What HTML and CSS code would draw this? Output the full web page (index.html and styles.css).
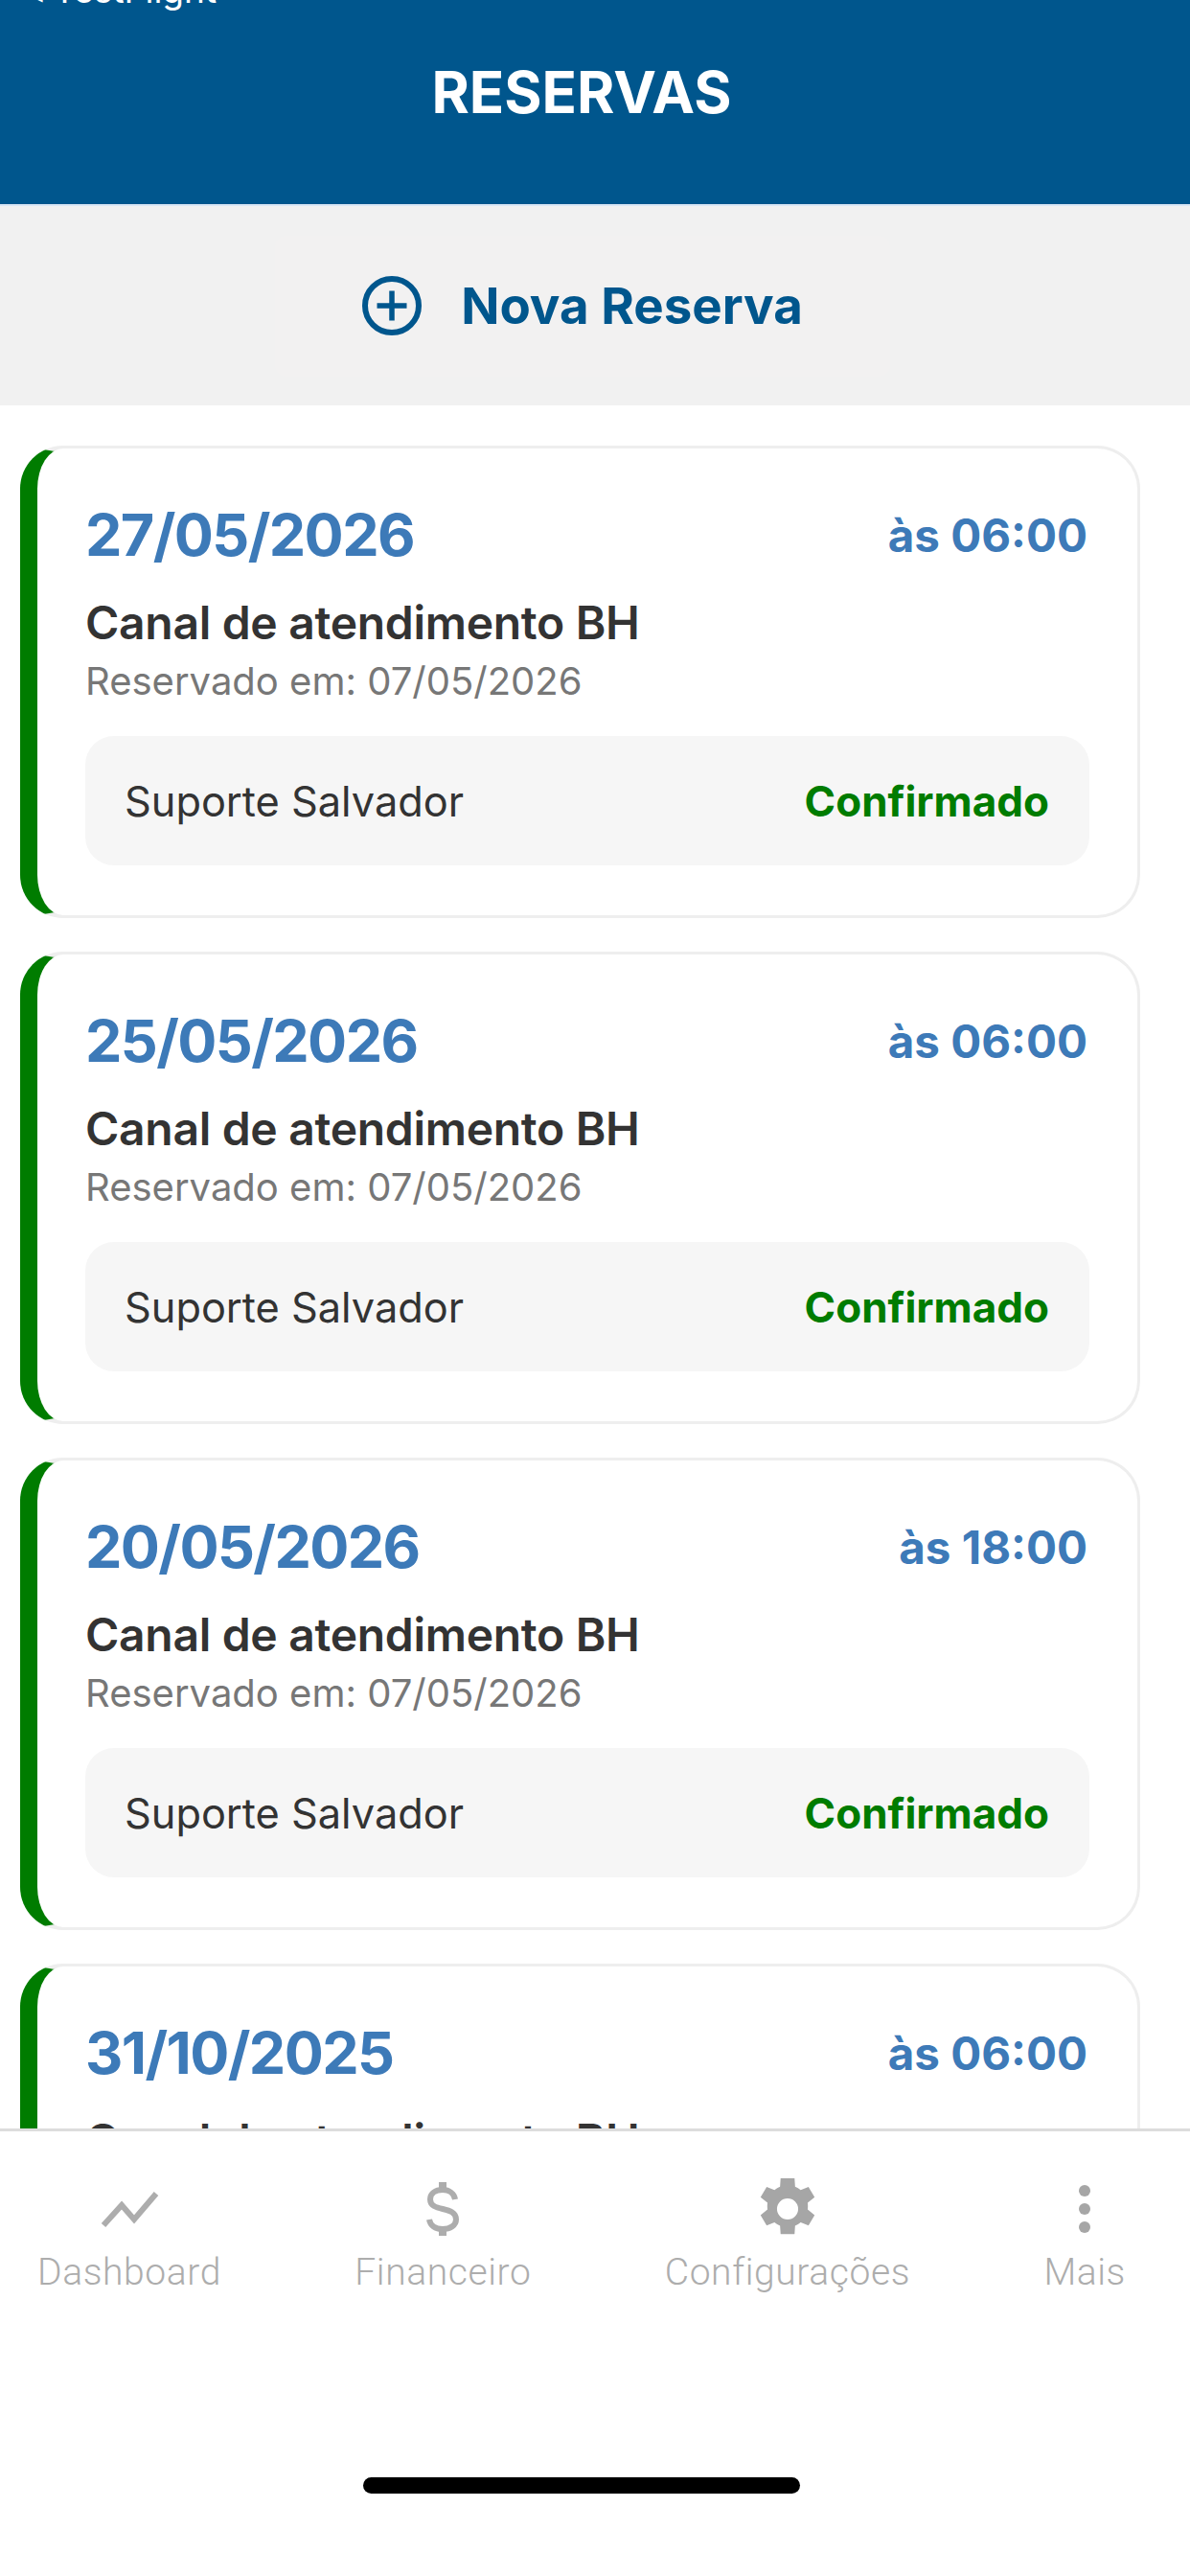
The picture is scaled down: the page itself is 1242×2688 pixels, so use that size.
FILE: index.html
```html
<!DOCTYPE html>
<html lang="pt-BR">
<head>
<meta charset="utf-8">
<title>Reservas</title>
<link rel="stylesheet" href="styles.css">
</head>
<body>
<div class="screen">
  <header class="topbar">
    <span class="back">◂ TestFlight</span>
    <h1 class="title">RESERVAS</h1>
  </header>
  <div class="action">
    <button class="new-btn" type="button">
      <svg class="plus" viewBox="0 0 62 62" aria-hidden="true"><circle cx="31" cy="31" r="28" fill="none" stroke="#00568d" stroke-width="6"/><path d="M31 15.500v31M15.500 31h31" fill="none" stroke="#00568d" stroke-width="5.500"/></svg>
      <span>Nova Reserva</span>
    </button>
  </div>
  <main class="list">
    <article class="card">
      <div class="row"><span class="date">27/05/2026</span><span class="time">às 06:00</span></div>
      <div class="channel">Canal de atendimento BH</div>
      <div class="booked">Reservado em: 07/05/2026</div>
      <div class="info"><span class="place">Suporte Salvador</span><span class="status">Confirmado</span></div>
    </article>
    <article class="card">
      <div class="row"><span class="date">25/05/2026</span><span class="time">às 06:00</span></div>
      <div class="channel">Canal de atendimento BH</div>
      <div class="booked">Reservado em: 07/05/2026</div>
      <div class="info"><span class="place">Suporte Salvador</span><span class="status">Confirmado</span></div>
    </article>
    <article class="card">
      <div class="row"><span class="date">20/05/2026</span><span class="time">às 18:00</span></div>
      <div class="channel">Canal de atendimento BH</div>
      <div class="booked">Reservado em: 07/05/2026</div>
      <div class="info"><span class="place">Suporte Salvador</span><span class="status">Confirmado</span></div>
    </article>
    <article class="card">
      <div class="row"><span class="date">31/10/2025</span><span class="time">às 06:00</span></div>
      <div class="channel">Canal de atendimento BH</div>
      <div class="booked">Reservado em: 07/05/2026</div>
      <div class="info"><span class="place">Suporte Salvador</span><span class="status">Confirmado</span></div>
    </article>
  </main>
  <nav class="tabs">
    <div class="tab">
      <svg class="tab-icon" viewBox="0 0 64 64" aria-hidden="true"><path d="M5 49 24 28l13 15 23-27" fill="none" stroke="#adadad" stroke-width="6"/></svg>
      <span>Dashboard</span>
    </div>
    <div class="tab">
      <svg class="tab-icon" viewBox="0 0 64 64" aria-hidden="true"><path d="M32 4v8M32 52v8" fill="none" stroke="#adadad" stroke-width="8"/><path d="M45 22c-1-6-6-10-13-10-8 0-13 4-13 10 0 14 27 6 27 21 0 6-6 10-14 10-8 0-13-4-14-10" fill="none" stroke="#adadad" stroke-width="6"/></svg>
      <span>Financeiro</span>
    </div>
    <div class="tab">
      <svg class="tab-icon" viewBox="1 1 22 22" aria-hidden="true"><path fill="#a6a6a6" fill-rule="evenodd" d="M14.500 1l.2 3a8.500 8.500 0 0 1 2 1.200l2.800-1.100 2.200 3.700-2.500 2a8.500 8.500 0 0 1 0 2.400l2.500 2-2.200 3.700-2.800-1.100a8.500 8.500 0 0 1-2 1.200l-.2 3h-5l-.2-3a8.500 8.500 0 0 1-2-1.200l-2.800 1.100-2.200-3.700 2.500-2a8.500 8.500 0 0 1 0-2.400l-2.500-2 2.200-3.700 2.800 1.100a8.500 8.500 0 0 1 2-1.200l.2-3zM12 8.200a3.800 3.800 0 1 0 0 7.600 3.800 3.800 0 0 0 0-7.600z"/></svg>
      <span>Configurações</span>
    </div>
    <div class="tab">
      <svg class="tab-icon" viewBox="0 0 64 64" aria-hidden="true"><circle cx="32" cy="13" r="6" fill="#a6a6a6"/><circle cx="32" cy="32" r="6" fill="#a6a6a6"/><circle cx="32" cy="51" r="6" fill="#a6a6a6"/></svg>
      <span>Mais</span>
    </div>
  </nav>
  <div class="home-zone"><div class="home-bar"></div></div>
</div>
</body>
</html>
```
FILE: styles.css
```css
* { box-sizing: border-box; }
html, body { margin: 0; padding: 0; background: #fff; }
.screen {
  width: 1242px;
  height: 2688px;
  display: flex;
  flex-direction: column;
  overflow: hidden;
  font-family: Inter, "Liberation Sans", sans-serif;
  position: relative;
}
.topbar {
  height: 213px;
  flex: none;
  background: #00568d;
  display: flex;
  justify-content: center;
  padding: 64px 28px 0 0;
  position: relative;
}
.back {
  position: absolute;
  left: 26px;
  top: -30px;
  font-size: 37px;
  line-height: 40px;
  color: #fff;
}
.title {
  margin: 0;
  font-size: 60px;
  line-height: 64px;
  font-weight: 700;
  color: #fff;
}
.action {
  height: 210px;
  flex: none;
  background: #f1f1f1;
  border-top: 2px solid #d9e6f5;
  display: flex;
  align-items: center;
  justify-content: center;
  padding-right: 26px;
}
.new-btn {
  width: 642px;
  height: 147px;
  border: 0;
  border-radius: 12px;
  background: #f2f1f1;
  display: flex;
  align-items: center;
  justify-content: center;
  gap: 41px;
  font: 700 52.8px Inter, "Liberation Sans", sans-serif;
  color: #00568d;
  padding: 0;
}
.plus { width: 62px; height: 62px; flex: none; }
.list {
  flex: 1;
  min-height: 0;
  overflow: hidden;
  padding: 42px 52px 0 21px;
  display: flex;
  flex-direction: column;
  gap: 35px;
}
.card {
  flex: none;
  height: 493px;
  background: #fff;
  border: 3px solid #eeeeee;
  border-left: 18px solid #007c00;
  border-radius: 45px;
  padding: 60px 49px 0 50px;
}
.row {
  display: flex;
  justify-content: space-between;
  align-items: center;
  height: 60px;
  padding-right: 3px;
}
.date { font-size: 61px; letter-spacing: -1.6px; font-weight: 700; color: #3d7ab8; }
.time { font-size: 47.5px; font-weight: 700; color: #3d7ab8; }
.channel {
  margin-top: 34px;
  font-size: 48px;
  letter-spacing: -0.3px;
  line-height: 56px;
  font-weight: 600;
  color: #333;
}
.booked {
  margin-top: 8px;
  font-size: 40px;
  line-height: 50px;
  color: #777;
}
.info {
  margin-top: 32px;
  height: 135px;
  margin-right: 1px;
  background: #f6f6f6;
  border-radius: 30px;
  padding: 0 42px 0 41px;
  display: flex;
  justify-content: space-between;
  align-items: center;
}
.place { font-size: 43.3px; color: #333; }
.status { font-size: 44px; font-weight: 700; color: #007c00; }
.tabs {
  flex: none;
  height: 210px;
  background: #fff;
  border-top: 3px solid #dcdcdc;
  display: flex;
  justify-content: space-between;
  padding: 49px 67px 0 39px;
  font-family: Roboto, sans-serif;
}
.tab {
  display: flex;
  flex-direction: column;
  align-items: center;
  font-size: 39px;
  line-height: 50px;
  color: #adadad;
  letter-spacing: 0.6px;
  font-weight: 300;
}
.tab-icon { width: 64px; height: 64px; margin-bottom: 9px; }
.home-zone {
  flex: none;
  height: 257px;
  display: flex;
  justify-content: center;
  padding: 154px 28px 0 0;
}
.home-bar {
  width: 456px;
  height: 17px;
  border-radius: 9px;
  background: #000;
}
```
